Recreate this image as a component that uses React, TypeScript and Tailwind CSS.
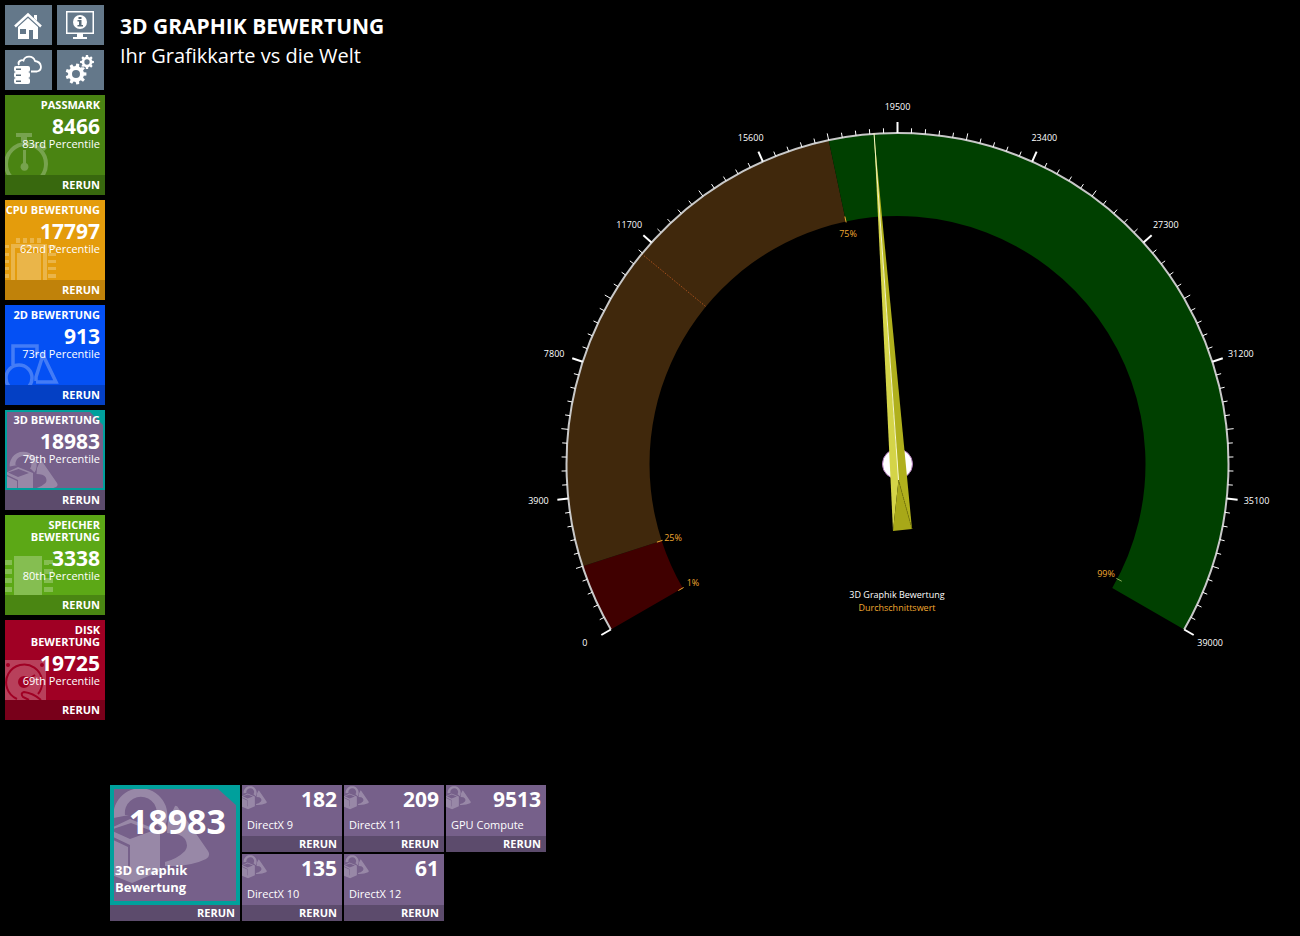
import type { ReactNode } from 'react';

const CX = 402.5;
const CY = 464;
const R_OUT = 331;
const R_IN = 248;
const MAX = 39000;
const MAJOR = 10;

// angle in degrees, 0 = straight up, clockwise
function polar(r: number, deg: number) {
  const a = (deg * Math.PI) / 180;
  return [CX + r * Math.sin(a), CY - r * Math.cos(a)];
}

function band(from: number, to: number) {
  const large = to - from > 180 ? 1 : 0;
  return `M${polar(R_OUT, from)} A${R_OUT} ${R_OUT} 0 ${large} 1 ${polar(R_OUT, to)} L${polar(R_IN, to)} A${R_IN} ${R_IN} 0 ${large} 0 ${polar(R_IN, from)} Z`;
}

function gear(cx: number, cy: number, r: number, teeth: number) {
  const pts: string[] = [];
  for (let i = 0; i < teeth; i++) {
    const base = (i / teeth) * Math.PI * 2;
    const step = (Math.PI * 2) / teeth;
    [[0.76, -0.32], [1, -0.2], [1, 0.2], [0.76, 0.32]].forEach(([k, o]) => {
      const a = base + o * step;
      pts.push(`${cx + r * k * Math.cos(a)},${cy + r * k * Math.sin(a)}`);
    });
  }
  const h = r * 0.38;
  return `M${pts.join('L')}Z M${cx - h} ${cy}a${h} ${h} 0 1 0 ${h * 2} 0a${h} ${h} 0 1 0 ${-h * 2} 0Z`;
}

const marks = [
  { deg: -120, label: '1%', x: 198, y: 586 },
  { deg: -108, label: '25%', x: 178, y: 541 },
  { deg: -12, label: '75%', x: 353, y: 237 },
  { deg: 117.6, label: '99%', x: 611, y: 577 },
];

function Gauge() {
  const ticks = Array.from({ length: 101 }, (_, i) => i);
  return (
    <svg viewBox="0 0 805 785" className="block w-full h-auto" role="img" aria-label="3D Graphik Bewertung 18983">
      <path d={band(-120, -108)} fill="#400000" />
      <path d={band(-108, -12)} fill="#40280c" />
      <path d={band(-12, 120)} fill="#004000" />
      <path d={`M${polar(R_OUT, -50.6)}L${polar(R_IN, -50.6)}`} stroke="#a8501c" strokeWidth="1" strokeDasharray="1.5 1.5" />
      <path d={`M${polar(R_OUT, -120)} A${R_OUT} ${R_OUT} 0 1 1 ${polar(R_OUT, 120)}`} fill="none" stroke="#c8c8c8" strokeWidth="2" />
      {ticks.map((i) => {
        const major = i % 10 === 0;
        const len = major ? 11 : i % 5 === 0 ? 7 : 5;
        const deg = -120 + i * 2.4;
        return (
          <path
            key={i}
            d={`M${polar(R_OUT, deg)}L${polar(R_OUT + len, deg)}`}
            stroke="#fff"
            strokeWidth={major ? 2 : 1}
          />
        );
      })}
      <g fontSize="9" fill="#fff" textAnchor="middle">
        {Array.from({ length: MAJOR + 1 }, (_, i) => {
          const deg = -120 + i * 24;
          return (
            <text key={i} x={polar(361, deg)[0]} y={polar(357, deg)[1] + 3}>
              {(MAX / MAJOR) * i}
            </text>
          );
        })}
      </g>
      <g fontSize="9" fill="#f0a830">
        {marks.map((m) => (
          <g key={m.label}>
            <path d={`M${polar(R_IN - 1, m.deg)}L${polar(R_IN + 5, m.deg)}`} stroke={m.label === '99%' ? '#8fae5a' : '#f0a830'} />
            <text x={m.x} y={m.y} textAnchor="middle">{m.label}</text>
          </g>
        ))}
      </g>

      {/* needle */}
      <circle cx="402.5" cy="464" r="15" fill="#fff" stroke="#b57ec0" />
      <path d="M379 133L398 531L403.500 480Z" fill="#d4d448" />
      <path d="M379 133L417 529L403.500 480Z" fill="#b0b01c" />
      <path d="M398 531L417 529L403.500 480Z" fill="#a8a818" />
      <path d="M417 529L403.500 480" stroke="#74740c" strokeWidth="1" strokeDasharray="1 1" />
      <path d="M379 133L403.500 480" stroke="#f8f8c8" strokeWidth="1" />

      <g fontSize="9" textAnchor="middle">
        <text x="402" y="598" fill="#fff">3D Graphik Bewertung</text>
        <text x="402" y="611" fill="#f0a830">Durchschnittswert</text>
      </g>
    </svg>
  );
}

function Shapes3D() {
  return (
    <g fillRule="evenodd">
      <path d="M3.500 33A27 27 0 1 1 53 45L47 39L44 37A16 16 0 1 0 15 30L19 30Z" />
      <path d="M-3 45L20 34L50 46V86L22 98L-3 88ZM0 45L20 54L42 46L21 38ZM-3 49V52L18 62V87L20 86V60Z" />
      <path d="M65 21Q67 20 69 24L98 66Q101 71 96 74Q80 82 55 81V77Q67 74 75 66Q79 61 75 54Q71 48 57 48L58 36Z" />
    </g>
  );
}

const art: Record<string, ReactNode> = {
  passmark: (
    <>
      <path d="M11 38h16v4h-5v5h-6v-5h-5Z" />
      <circle cx="21" cy="69" r="20" fill="none" stroke="#fff" strokeWidth="4" />
      <path d="M34 51l3-3 5 5-3 3ZM18 55h3v13a4 4 0 1 1-3 0Z" />
    </>
  ),
  cpu: (
    <>
      <path d="M6 44h36v36H6ZM10 48v32h2V54q0-1 1-1h22q1 0 1 1v26h2V48Z" fillRule="evenodd" />
      <path d="M12 53h23v27H12Z" />
      <path d="M11 38h4v5h-4ZM18 38h4v5h-4ZM25 38h4v5h-4ZM32 38h4v5h-4ZM43 45h8v3h-8ZM43 53h8v3h-8ZM43 60h8v3h-8ZM43 67h8v3h-8ZM43 74h8v4h-8ZM0 45h4v3H0ZM0 53h4v3H0ZM0 60h4v3H0ZM0 67h4v3H0ZM0 74h4v4H0Z" />
    </>
  ),
  flat: (
    <g fill="none" stroke="#fff" strokeWidth="3.500">
      <path d="M8 60V41H32V50" />
      <circle cx="14" cy="73" r="13" />
      <path d="M31 76L31 72L38 50L51 77H31" />
    </g>
  ),
  solid: (
    <g transform="translate(3 40) scale(0.5)">
      <Shapes3D />
    </g>
  ),
  memory: (
    <path d="M9 41h28v39H9ZM0 45h7v5H0ZM0 54h7v5H0ZM0 63h7v5H0ZM0 72h7v5H0ZM39 45h9v4h-4v1h-5ZM39 54h9v5h-9ZM39 63h9v5h-9ZM39 72h9v5h-9Z" />
  ),
  disk: (
    <>
      <path d="M0 40h41v40H0Z" />
      <g stroke="#a00024" strokeWidth="2" fill="none">
        <path d="M33 74A18 18 0 1 0 12 79" />
        <circle cx="19" cy="62" r="5" fill="#a00024" />
        <path d="M22 60L30 55" />
        <path d="M36 80Q28 73 19 72Q15 73 18 77L24 80" />
      </g>
      <circle cx="3" cy="45" r="2" fill="#a00024" />
      <circle cx="37" cy="45" r="2" fill="#a00024" />
    </>
  ),
};

const tiles = [
  { title: 'PASSMARK', score: 8466, rank: '83rd', icon: 'passmark', body: 'bg-[#4a8412]', foot: 'bg-[#38680e]' },
  { title: 'CPU BEWERTUNG', score: 17797, rank: '62nd', icon: 'cpu', body: 'bg-[#e49c0c]', foot: 'bg-[#c0820a]' },
  { title: '2D BEWERTUNG', score: 913, rank: '73rd', icon: 'flat', body: 'bg-[#0450f4]', foot: 'bg-[#0440c4]' },
  { title: '3D BEWERTUNG', score: 18983, rank: '79th', icon: 'solid', body: 'bg-[#76608a]', foot: 'bg-[#5c4b6c]', active: true },
  { title: 'SPEICHER BEWERTUNG', score: 3338, rank: '80th', icon: 'memory', body: 'bg-[#5ca816]', foot: 'bg-[#4a8612]' },
  { title: 'DISK BEWERTUNG', score: 19725, rank: '69th', icon: 'disk', body: 'bg-[#a00024]', foot: 'bg-[#78001a]' },
];

const subTests = [
  { name: 'DirectX 9', score: 182 },
  { name: 'DirectX 11', score: 209 },
  { name: 'GPU Compute', score: 9513 },
  { name: 'DirectX 10', score: 135 },
  { name: 'DirectX 12', score: 61 },
];

const navItems = [
  {
    label: 'Home',
    icon: (
      <>
        <path d="M10 21.500L23 9.500L36 21.500" fill="none" stroke="#fff" strokeWidth="2.500" />
        <path d="M29 10h3v6l-3-3Z" />
        <path d="M13 22L23 13L33 22V34H28V25H24V34H13ZM15 24V29H21V24Z" fillRule="evenodd" />
      </>
    ),
  },
  {
    label: 'System',
    icon: (
      <>
        <path d="M9 6H37V29H9ZM10.500 7.500V27.500H35.500V7.500Z" fillRule="evenodd" />
        <path d="M20 29h6v3h4v2H16v-2h4Z" />
        <circle cx="23" cy="17" r="7" />
        <path d="M21.500 12h3v2h-3ZM20.500 15h4v5h1.500v1.500h-5.500v-1.500h1.500v-3.500h-1.500Z" fill="#5a6c7a" />
      </>
    ),
  },
  {
    label: 'Baselines',
    icon: (
      <>
        <path d="M14 15C12 11 17 9.500 18.500 10.500C20 5.500 28 5 30 11C37 12 38 20 32 21.500H26" fill="none" stroke="#fff" strokeWidth="1.800" />
        <rect x="9" y="16" width="16" height="6" rx="2" />
        <rect x="9" y="22" width="16" height="6" rx="2" />
        <rect x="9" y="28" width="16" height="6" rx="2" />
        <path d="M11 18.500h5v1.500h-5ZM11 24.500h5v1.500h-5ZM11 30.500h5v1.500h-5Z" fill="#5a6c7a" />
      </>
    ),
  },
  {
    label: 'Einstellungen',
    icon: <path d={`${gear(19, 24, 10.5, 9)} ${gear(30, 12, 7, 8)}`} fillRule="evenodd" />,
  },
];

function Sidebar() {
  return (
    <aside className="w-[100px] shrink-0 flex flex-col gap-[5px]">
      <nav className="grid grid-cols-2 gap-[5px] pr-px">
        {navItems.map((n) => (
          <button key={n.label} aria-label={n.label} className="h-10 bg-[#64788a] flex items-center justify-center">
            <svg viewBox="0 0 47 40" className="w-full h-10" fill="#fff">{n.icon}</svg>
          </button>
        ))}
      </nav>
      {tiles.map((t) => (
        <section key={t.title}>
          <div className={`relative h-20 overflow-hidden text-right text-white ${t.body}`}>
            <svg viewBox="0 0 100 80" className="absolute inset-0 size-full opacity-25" fill="#fff">{art[t.icon]}</svg>
            {t.active && (
              <svg viewBox="0 0 100 80" className="absolute inset-0 size-full" aria-hidden="true">
                <path d="M1 1H99V79H1Z" fill="none" stroke="#00a09c" strokeWidth="2" />
                <path d="M83 0H100V17Z" fill="#00a09c" />
              </svg>
            )}
            <div className="relative pt-1 pr-[5px]">
              <h2 className="text-[11px] leading-[12px] font-bold">{t.title}</h2>
              <p className="mt-1 text-[21px] leading-[22px] font-bold">{t.score}</p>
              <p className="text-[11px] leading-[14px]">{t.rank} Percentile</p>
            </div>
          </div>
          <button className={`block w-full h-5 pr-[5px] text-right text-[11px] leading-5 font-bold text-white ${t.foot}`}>RERUN</button>
        </section>
      ))}
    </aside>
  );
}

function SubTests() {
  return (
    <div className="flex items-start gap-0.5 text-white">
      <section className="w-[130px] shrink-0">
        <div className="relative h-[120px] overflow-hidden bg-[#76608a]">
          <svg viewBox="0 0 130 120" className="absolute inset-0 size-full opacity-25" fill="#fff"><Shapes3D /></svg>
          <svg viewBox="0 0 130 120" className="absolute inset-0 size-full" aria-hidden="true">
            <path d="M2 2H128V118H2Z" fill="none" stroke="#00a09c" strokeWidth="4" />
            <path d="M107 3H127V21Z" fill="#00a09c" />
          </svg>
          <div className="relative h-full flex flex-col justify-between pt-4 pb-[9px] px-[5px]">
            <p className="pr-[9px] text-right text-[34px] leading-[40px] font-bold">18983</p>
            <p className="text-[13px] leading-[17px] font-bold">3D Graphik<br />Bewertung</p>
          </div>
        </div>
        <button className="block w-full h-4 pr-[5px] text-right text-[11px] leading-4 font-bold bg-[#5c4b6c]">RERUN</button>
      </section>
      <div className="grid grid-cols-[repeat(3,100px)] gap-0.5">
        {subTests.map((s) => (
          <section key={s.name}>
            <div className="relative h-[51px] overflow-hidden bg-[#76608a] pl-[5px] pr-[5px]">
              <svg viewBox="-3 0 103 100" className="absolute top-0 left-0 size-[25px] opacity-25" fill="#fff"><Shapes3D /></svg>
              <p className="relative pt-0.5 text-right text-[21px] leading-[24px] font-bold">{s.score}</p>
              <p className="relative mt-[7px] text-[11px] leading-[14px]">{s.name}</p>
            </div>
            <button className="block w-full h-4 pr-[5px] text-right text-[11px] leading-4 font-bold bg-[#5c4b6c]">RERUN</button>
          </section>
        ))}
      </div>
    </div>
  );
}

export default function App() {
  return (
    <div className="min-h-screen bg-black text-white font-['Open_Sans','Noto_Sans',sans-serif] flex items-start gap-[5px]">
      <div className="pt-[5px] pl-[5px] shrink-0">
        <Sidebar />
      </div>
      <main className="flex-1 min-w-0 pb-[15px]">
        <div className="flex items-start">
          <header className="w-[385px] shrink-0 pt-[11px] pl-[10px]">
            <h1 className="text-[21px] leading-[30px] font-bold">3D GRAPHIK BEWERTUNG</h1>
            <p className="text-[20px] leading-[30px]">Ihr Grafikkarte vs die Welt</p>
          </header>
          <div className="flex-1 min-w-0">
            <Gauge />
          </div>
        </div>
        <SubTests />
      </main>
    </div>
  );
}
